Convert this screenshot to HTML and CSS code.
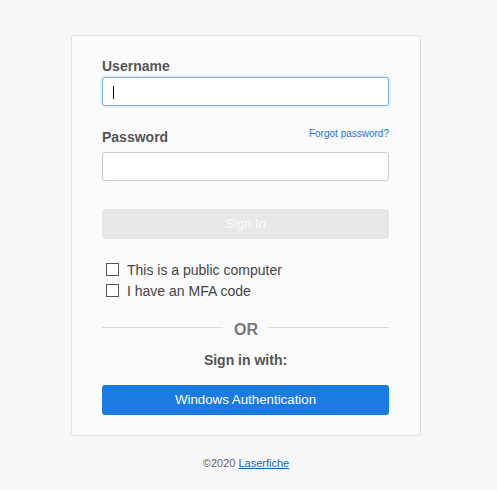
FILE: index.html
```html
<!DOCTYPE html>
<html>
<head>
    <title>Sign In</title>
    <link rel="stylesheet" href="styles.css">
</head>
<body>
    <div class="login-card">
        <div class="form-group">
            <label for="username" class="field-label">Username</label>
            <div class="input-wrap">
                <input type="text" id="username" class="text-input focused">
                <span class="caret"></span>
            </div>
        </div>

        <div class="form-group password-group">
            <div class="label-row">
                <label for="password" class="field-label">Password</label>
                <a href="#" class="forgot-link">Forgot password?</a>
            </div>
            <input type="password" id="password" class="text-input">
        </div>

        <button class="btn btn-disabled" disabled>Sign In</button>

        <div class="options">
            <label class="check-row">
                <input type="checkbox" class="check">
                <span>This is a public computer</span>
            </label>
            <label class="check-row">
                <input type="checkbox" class="check">
                <span>I have an MFA code</span>
            </label>
        </div>

        <div class="divider">
            <span class="divider-line"></span>
            <span class="divider-text">OR</span>
            <span class="divider-line"></span>
        </div>

        <div class="sign-in-with">Sign in with:</div>

        <button class="btn btn-primary">Windows Authentication</button>
    </div>

    <div class="footer">&copy;2020 <a href="#">Laserfiche</a></div>
</body>
</html>
```

FILE: styles.css
```css
body {
    margin: 0;
    padding: 35px 5px 0 0;
    background-color: #f7f7f7;
    font-family: "Liberation Sans", Arial, sans-serif;
    color: #555;
}
.login-card {
    width: 287px;
    margin: 0 auto;
    padding: 20px 31px 20px 30px;
    background-color: #fbfbfb;
    border: 1px solid #e2e2e2;
    border-radius: 3px;
}
.field-label {
    display: block;
    font-size: 14px;
    font-weight: bold;
    line-height: 20px;
    color: #555;
}
.form-group .field-label {
    margin-bottom: 1px;
}
.input-wrap {
    position: relative;
}
.text-input {
    display: block;
    width: 100%;
    height: 29px;
    box-sizing: border-box;
    margin: 0;
    padding: 4px 10px;
    border: 1px solid #cccccc;
    border-radius: 3px;
    background-color: #fff;
    font-size: 14px;
    outline: none;
}
.text-input.focused {
    border-color: #7fb2e5;
    box-shadow: 0 0 3px rgba(102, 175, 233, 0.6);
}
.caret {
    position: absolute;
    left: 11px;
    top: 9px;
    width: 1px;
    height: 13px;
    background-color: #000;
}
.password-group {
    margin-top: 21px;
}
.label-row {
    display: flex;
    justify-content: space-between;
    align-items: flex-start;
    margin-bottom: 5px;
}
.label-row .field-label {
    margin-bottom: 0;
}
.forgot-link {
    font-size: 10px;
    line-height: 14px;
    color: #2a72c0;
    text-decoration: none;
}
.btn {
    display: block;
    width: 100%;
    height: 30px;
    border: none;
    border-radius: 3px;
    font-family: "Liberation Sans", Arial, sans-serif;
    font-size: 13px;
    line-height: 28px;
    color: #fff;
    padding: 0;
}
.btn-disabled {
    margin-top: 28px;
    background-color: #e8e8e8;
    color: #fbfbfb;
}
.btn-primary {
    margin-top: 15px;
    background-color: #1b7be0;
    font-size: 13.3px;
    cursor: pointer;
}
.options {
    margin-top: 20px;
}
.check-row {
    display: flex;
    align-items: center;
    height: 21px;
    font-size: 14px;
    color: #444;
}
.check {
    appearance: none;
    -webkit-appearance: none;
    width: 13px;
    height: 13px;
    margin: 0 8px 0 4px;
    border: 1px solid #555;
    background-color: #fff;
    box-sizing: border-box;
}
.divider {
    display: flex;
    align-items: flex-start;
    margin-top: 19px;
    height: 20px;
}
.divider-line {
    flex: 1;
    height: 1px;
    margin-top: 7px;
    background-color: #dcdcdc;
}
.divider-text {
    padding: 0 10px 0 11px;
    font-size: 16px;
    font-weight: bold;
    line-height: 20px;
    color: #777;
}
.sign-in-with {
    margin-top: 10px;
    text-align: center;
    font-size: 14px;
    font-weight: bold;
    line-height: 20px;
    color: #555;
}
.footer {
    margin-top: 20px;
    text-align: center;
    font-size: 11px;
    line-height: 14px;
    color: #666;
}
.footer a {
    color: #1a5fa8;
}
```
